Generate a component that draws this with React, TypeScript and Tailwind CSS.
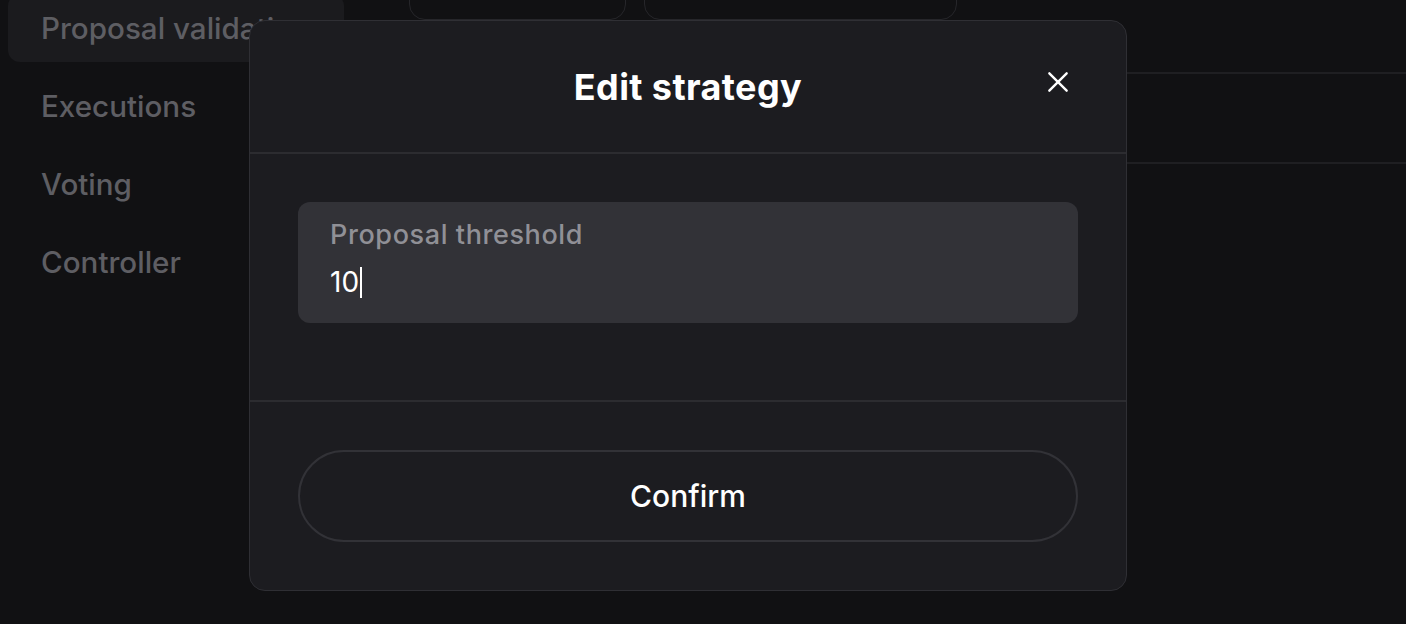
import React from "react";

const navItems = ["Proposal validation", "Executions", "Voting", "Controller"];

const CloseIcon = () => (
  <svg width="26" height="26" viewBox="0 0 24 24" fill="none" stroke="currentColor" strokeWidth="2.2" strokeLinecap="round">
    <path d="M4 4L20 20M20 4L4 20" />
  </svg>
);

export default function App() {
  return (
    <div
      className="relative w-[1406px] h-[624px] overflow-hidden bg-[#111113]"
      style={{ fontFamily: "Inter, 'Noto Sans', sans-serif" }}
    >
      {/* page underneath */}
      <div className="flex h-full">
        <nav className="ml-[8px] mt-[-6px] flex w-[336px] flex-col gap-[10px]">
          {navItems.map((item, i) => (
            <div
              key={item}
              className={`flex h-[68px] items-center whitespace-nowrap overflow-hidden rounded-[12px] pl-[33px] text-[29.6px] font-medium text-[#5e5e63] ${
                i === 0 ? "bg-[#1b1b1e]" : ""
              }`}
            >
              {item}
            </div>
          ))}
        </nav>
        <main className="ml-[65px] flex flex-1 flex-col">
          <div className="flex gap-[18px]">
            <div className="mt-[-20px] h-[40px] w-[217px] rounded-b-[16px] border border-[#26262a]" />
            <div className="mt-[-20px] h-[40px] w-[313px] rounded-b-[16px] border border-[#26262a]" />
          </div>
          <div className="mt-[52px] h-[92px] border-y-2 border-[#1f1f22]" />
        </main>
      </div>

      {/* modal */}
      <div className="absolute left-[249px] top-[20px] flex h-[571px] w-[878px] flex-col rounded-[16px] border border-[#2f2f34] bg-[#1c1c20]">
        <div className="relative flex h-[133px] items-center justify-center border-b-2 border-[#2c2c30]">
          <h2 className="text-[36px] font-bold tracking-[0.4px] text-white">Edit strategy</h2>
          <button className="absolute right-[55px] top-[48px] text-white">
            <CloseIcon />
          </button>
        </div>
        <div className="px-[48px] pt-[48px] pb-[77px] border-b-2 border-[#2c2c30]">
          <div className="flex h-[121px] flex-col rounded-[12px] bg-[#323237] px-[32px] pt-[18px]">
            <label className="text-[27px] font-medium leading-[30px] tracking-[0.6px] text-[#909096]">Proposal threshold</label>
            <div className="mt-[16px] flex items-center text-[28px] leading-[32px] text-white">
              10
              <span className="ml-[1px] inline-block h-[31px] w-[2px] bg-white" />
            </div>
          </div>
        </div>
        <div className="px-[48px] pt-[48px]">
          <button className="flex h-[92px] w-full items-center justify-center rounded-full border-2 border-[#323237] text-[30px] font-medium text-white">
            Confirm
          </button>
        </div>
      </div>
    </div>
  );
}
